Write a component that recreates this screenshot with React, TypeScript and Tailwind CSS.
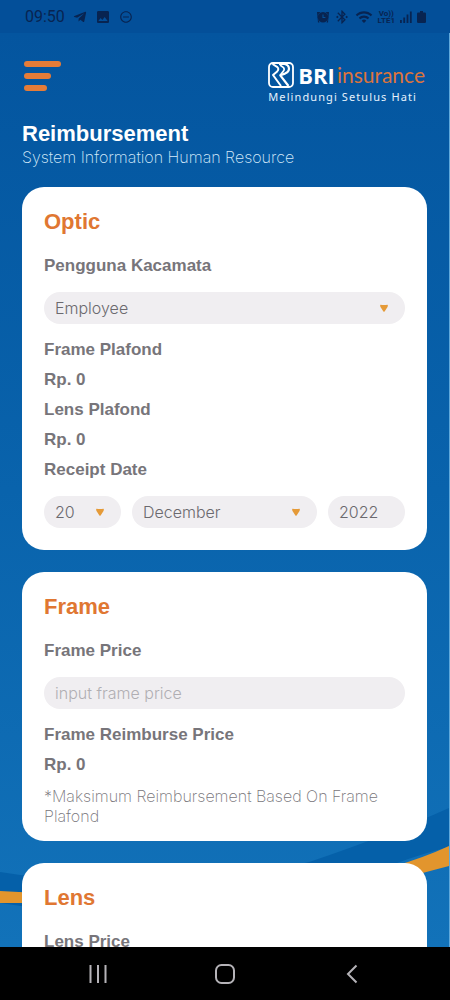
import type { ReactNode } from "react";
import { FaTelegramPlane } from "react-icons/fa";
import { MdBluetoothConnected, MdImage, MdRemoveCircleOutline, MdWifi } from "react-icons/md";

function AlarmIcon() {
  return (
    <svg viewBox="0 0 12 12" className="size-3" aria-hidden="true">
      <path d="M0 1h3.500l-2 2v6l1 2.500H1zM12 1H8.500l2 2v6l-1 2.500H11z" fill="currentColor" />
      <circle cx="6" cy="6.2" r="5.2" fill="currentColor" />
      <path d="M6 3.5v3h2.4" fill="none" stroke="#03509a" strokeWidth="1.1" />
    </svg>
  );
}

function SignalIcon() {
  return (
    <svg viewBox="0 0 12 12" className="size-3" fill="currentColor" aria-hidden="true">
      <rect x="0" y="9" width="1.8" height="3" />
      <rect x="3.3" y="6.5" width="1.8" height="5.5" />
      <rect x="6.6" y="3.5" width="1.8" height="8.5" />
      <rect x="9.9" y="0.5" width="1.8" height="11.5" />
    </svg>
  );
}

function BatteryIcon() {
  return (
    <svg viewBox="0 0 9 12" className="h-3 w-[9px]" fill="currentColor" aria-hidden="true">
      <path d="M3 0h3v1.500h1.800Q9 1.500 9 2.700v8.100Q9 12 7.800 12H1.200Q0 12 0 10.800V2.700Q0 1.500 1.200 1.500H3z" />
    </svg>
  );
}

function StatusBar() {
  return (
    <div className="flex h-[33px] shrink-0 items-center justify-between bg-[#034f99] pr-6 pl-[25px] text-[#082451]">
      <div className="flex items-center gap-2">
        <span className="font-['Roboto',sans-serif] text-base leading-5">09:50</span>
        <FaTelegramPlane className="size-[14px]" />
        <MdImage className="size-4" />
        <MdRemoveCircleOutline className="size-[14px]" />
      </div>
      <div className="flex items-center gap-[5px]">
        <AlarmIcon />
        <MdBluetoothConnected className="size-4" />
        <MdWifi className="size-[18px]" />
        <span className="flex flex-col items-center font-['Roboto',sans-serif] text-[8px] leading-[7px] font-bold">
          <span>Vo))</span>
          <span>LTE1</span>
        </span>
        <SignalIcon />
        <BatteryIcon />
      </div>
    </div>
  );
}

function Logo() {
  return (
    <div className="flex flex-col">
      <div className="flex h-[28px] items-center gap-1">
        <svg viewBox="0 0 26 26" className="size-[26px]" fill="none" stroke="#fff" aria-hidden="true">
          <rect x="1" y="1" width="24" height="24" rx="4" strokeWidth="1.8" />
          <path d="M4.500 2L9 4.800Q11.500 7 9.200 9.400L5 13L13 24" strokeWidth="2" strokeLinejoin="round" />
          <path d="M11 2H16.500Q21 2.800 21 7Q20.800 10 17 11.600L12.300 13.300L20.500 24" strokeWidth="2.200" strokeLinejoin="round" />
          <path d="M12 3L15.500 5.500Q17 7.500 15.200 9.400L12.300 13" strokeWidth="1.600" />
        </svg>
        <div className="flex items-center gap-[2px] leading-[28px]">
          <span className="font-['Open_Sans',sans-serif] text-[22px] font-bold text-white">BRI</span>
          <span className="font-['Lato',sans-serif] text-[21px] font-normal text-[#dc743c]">insurance</span>
        </div>
      </div>
      <span className="font-['Noto_Sans',sans-serif] text-[11px] leading-4 tracking-widest text-[#e6f2fc]">
        Melindungi Setulus Hati
      </span>
    </div>
  );
}

function Backdrop() {
  return (
    <svg
      viewBox="0 0 450 140"
      preserveAspectRatio="none"
      className="absolute inset-x-0 bottom-0 h-[140px] w-full"
      aria-hidden="true"
    >
      <path d="M0 65Q160 92 310 55Q390 28 450 1V40Q400 52 330 84Q180 125 0 96Z" fill="#0560a9" />
      <path d="M0 84Q190 96 330 74Q400 62 450 39V59Q400 72 330 92Q180 112 22 96L0 96Z" fill="#e2952d" />
    </svg>
  );
}

function Card({ title, children }: { title: string; children: ReactNode }) {
  return (
    <section className="rounded-[22px] bg-white px-[22px] pt-5 text-[#77757a]">
      <h2 className="mb-[14px] text-[22px] leading-[30px] font-bold text-[#e07732]">{title}</h2>
      {children}
    </section>
  );
}

const rowText = "block text-[17px] leading-[30px] font-bold";
const pill =
  "h-8 w-full appearance-none rounded-2xl bg-[#f0eef1] px-[11px] font-['Inter',sans-serif] text-base font-light text-[#6b696e] outline-none placeholder:text-[#b0aeb3]";

function PillSelect({ id, label, value }: { id: string; label?: string; value: string }) {
  return (
    <div className="relative">
      <select id={id} aria-label={label} className={pill} defaultValue={value}>
        <option>{value}</option>
      </select>
      <svg
        viewBox="0 0 8 8"
        className="pointer-events-none absolute top-3 right-[17px] size-2"
        aria-hidden="true"
      >
        <path d="M.5.7Q4 1.500 7.500.7Q8.200 1.200 7.500 3L4.600 7.400Q4 8 3.400 7.400L.5 3Q-.2 1.200.5.7Z" fill="#e59a38" />
      </svg>
    </div>
  );
}

export default function App() {
  return (
    <div className="flex h-screen flex-col bg-black font-['Liberation_Sans',sans-serif]">
      <StatusBar />
      <div className="relative min-h-0 flex-1 overflow-hidden border-r border-[#5fa9dc] bg-linear-to-b from-[#04559f] via-[#0963ac] to-[#1272b9]">
        <Backdrop />
        <div className="relative h-full overflow-y-auto px-[22px] [scrollbar-width:none]">
          <header className="flex items-start justify-between px-[2px] pt-7">
            <button type="button" aria-label="Menu" className="flex flex-col gap-[6px]">
              <span className="h-[6px] w-[37px] rounded-full bg-[#e57c38]" />
              <span className="h-[6px] w-[27px] rounded-full bg-[#e57c38]" />
              <span className="h-[6px] w-[23px] rounded-full bg-[#e57c38]" />
            </button>
            <Logo />
          </header>

          <div className="mt-4 mb-5">
            <h1 className="text-[22px] leading-[26px] font-bold text-white">Reimbursement</h1>
            <p className="font-['Inter',sans-serif] text-base leading-5 font-extralight text-[#d5eafa]">
              System Information Human Resource
            </p>
          </div>

          <main className="flex flex-col gap-[22px]">
            <Card title="Optic">
              <div className="flex flex-col gap-[11px] pb-[22px]">
                <label htmlFor="user" className={rowText}>Pengguna Kacamata</label>
                <PillSelect id="user" value="Employee" />
                <div>
                  <p className={rowText}>Frame Plafond</p>
                  <p className={rowText}>Rp. 0</p>
                  <p className={rowText}>Lens Plafond</p>
                  <p className={rowText}>Rp. 0</p>
                  <label htmlFor="day" className={rowText}>Receipt Date</label>
                </div>
                <div className="grid grid-cols-[77px_1fr_77px] gap-[11px]">
                  <PillSelect id="day" value="20" />
                  <PillSelect id="month" label="Month" value="December" />
                  <input aria-label="Year" className={pill} defaultValue="2022" />
                </div>
              </div>
            </Card>

            <Card title="Frame">
              <div className="flex flex-col gap-[11px] pb-[15px]">
                <label htmlFor="frame-price" className={rowText}>Frame Price</label>
                <input id="frame-price" className={pill} placeholder="input frame price" />
                <div>
                  <p className={rowText}>Frame Reimburse Price</p>
                  <p className={rowText}>Rp. 0</p>
                  <p className="mt-[6px] font-['Inter',sans-serif] text-base leading-5 font-extralight">
                    *Maksimum Reimbursement Based On Frame Plafond
                  </p>
                </div>
              </div>
            </Card>

            <Card title="Lens">
              <div className="flex flex-col gap-[11px] pb-[22px]">
                <label htmlFor="lens-price" className={rowText}>Lens Price</label>
                <input id="lens-price" className={pill} />
              </div>
            </Card>
          </main>
        </div>
      </div>

      <nav className="flex h-[53px] shrink-0 items-center justify-around bg-black px-[35px] text-[#b5b3b8]">
        <button type="button" aria-label="Recent apps">
          <svg viewBox="0 0 20 20" className="size-5" fill="none" stroke="currentColor" strokeWidth="2">
            <path d="M2.500 1v18M10 1v18M17.500 1v18" />
          </svg>
        </button>
        <button type="button" aria-label="Home">
          <svg viewBox="0 0 20 20" className="size-5" fill="none" stroke="currentColor" strokeWidth="2">
            <rect x="1" y="1" width="18" height="18" rx="5.500" />
          </svg>
        </button>
        <button type="button" aria-label="Back">
          <svg viewBox="0 0 20 20" className="size-5" fill="none" stroke="currentColor" strokeWidth="2">
            <path d="M14.500 1.500L6 10l8.500 8.500" />
          </svg>
        </button>
      </nav>
    </div>
  );
}
